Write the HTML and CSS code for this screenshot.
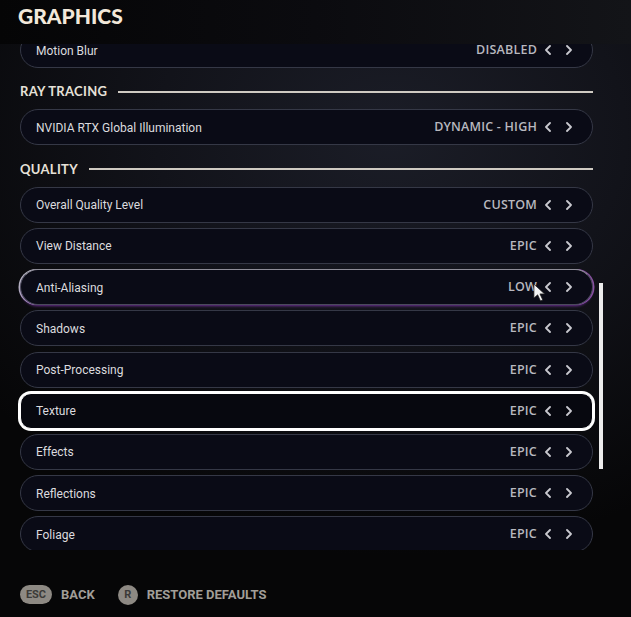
FILE: index.html
```html
<!DOCTYPE html>
<html>
<head>
<meta charset="utf-8">
<link rel="stylesheet" href="styles.css">
</head>
<body>
<div class="screen">
  <header class="top"><h1 class="title">GRAPHICS</h1></header>
  <div class="scroller">
    <div class="list">
      <div class="row first"><span class="label">Motion Blur</span><span class="val">DISABLED</span><span class="arrows"><svg class="chev" viewBox="0 0 6 10"><polyline points="5,1 1,5 5,9"/></svg><svg class="chev" viewBox="0 0 6 10"><polyline points="1,1 5,5 1,9"/></svg></span></div>
      <div class="section"><span class="sec-title">RAY TRACING</span><span class="sec-line"></span></div>
      <div class="row"><span class="label">NVIDIA RTX Global Illumination</span><span class="val">DYNAMIC - HIGH</span><span class="arrows"><svg class="chev" viewBox="0 0 6 10"><polyline points="5,1 1,5 5,9"/></svg><svg class="chev" viewBox="0 0 6 10"><polyline points="1,1 5,5 1,9"/></svg></span></div>
      <div class="section"><span class="sec-title">QUALITY</span><span class="sec-line"></span></div>
      <div class="row"><span class="label">Overall Quality Level</span><span class="val">CUSTOM</span><span class="arrows"><svg class="chev" viewBox="0 0 6 10"><polyline points="5,1 1,5 5,9"/></svg><svg class="chev" viewBox="0 0 6 10"><polyline points="1,1 5,5 1,9"/></svg></span></div>
      <div class="row"><span class="label">View Distance</span><span class="val">EPIC</span><span class="arrows"><svg class="chev" viewBox="0 0 6 10"><polyline points="5,1 1,5 5,9"/></svg><svg class="chev" viewBox="0 0 6 10"><polyline points="1,1 5,5 1,9"/></svg></span></div>
      <div class="row hover"><span class="label">Anti-Aliasing</span><span class="val">LOW</span><span class="arrows"><svg class="chev" viewBox="0 0 6 10"><polyline points="5,1 1,5 5,9"/></svg><svg class="chev" viewBox="0 0 6 10"><polyline points="1,1 5,5 1,9"/></svg></span>
        <svg class="cursor" viewBox="0 0 14 20"><path d="M1 1 L1 16 L5 12.5 L8 19 L10.5 18 L7.5 11.5 L12.5 11.5 Z"/></svg>
      </div>
      <div class="row"><span class="label">Shadows</span><span class="val">EPIC</span><span class="arrows"><svg class="chev" viewBox="0 0 6 10"><polyline points="5,1 1,5 5,9"/></svg><svg class="chev" viewBox="0 0 6 10"><polyline points="1,1 5,5 1,9"/></svg></span></div>
      <div class="row"><span class="label">Post-Processing</span><span class="val">EPIC</span><span class="arrows"><svg class="chev" viewBox="0 0 6 10"><polyline points="5,1 1,5 5,9"/></svg><svg class="chev" viewBox="0 0 6 10"><polyline points="1,1 5,5 1,9"/></svg></span></div>
      <div class="row selected"><span class="label">Texture</span><span class="val">EPIC</span><span class="arrows"><svg class="chev" viewBox="0 0 6 10"><polyline points="5,1 1,5 5,9"/></svg><svg class="chev" viewBox="0 0 6 10"><polyline points="1,1 5,5 1,9"/></svg></span></div>
      <div class="row"><span class="label">Effects</span><span class="val">EPIC</span><span class="arrows"><svg class="chev" viewBox="0 0 6 10"><polyline points="5,1 1,5 5,9"/></svg><svg class="chev" viewBox="0 0 6 10"><polyline points="1,1 5,5 1,9"/></svg></span></div>
      <div class="row"><span class="label">Reflections</span><span class="val">EPIC</span><span class="arrows"><svg class="chev" viewBox="0 0 6 10"><polyline points="5,1 1,5 5,9"/></svg><svg class="chev" viewBox="0 0 6 10"><polyline points="1,1 5,5 1,9"/></svg></span></div>
      <div class="row"><span class="label">Foliage</span><span class="val">EPIC</span><span class="arrows"><svg class="chev" viewBox="0 0 6 10"><polyline points="5,1 1,5 5,9"/></svg><svg class="chev" viewBox="0 0 6 10"><polyline points="1,1 5,5 1,9"/></svg></span></div>
    </div>
    <div class="track"><div class="thumb"></div></div>
  </div>
  <footer class="bottom">
    <span class="key esc">ESC</span><span class="action">BACK</span>
    <span class="key round">R</span><span class="action">RESTORE DEFAULTS</span>
  </footer>
</div>
</body>
</html>
```

FILE: styles.css
```css
* { box-sizing: border-box; }
html, body { margin: 0; padding: 0; }
body {
  width: 631px;
  height: 617px;
  overflow: hidden;
  background: #050506;
  font-family: Roboto, "Liberation Sans", sans-serif;
}
.screen {
  width: 631px;
  height: 617px;
  display: flex;
  flex-direction: column;
  background:
    radial-gradient(ellipse 520px 420px at 62% 22%, #1b1d27 0%, #12131a 45%, #060607 100%);
}
.top {
  height: 44px;
  flex: none;
  position: relative;
  z-index: 2;
  background: linear-gradient(90deg, #050506 0%, #0b0b0f 50%, #131418 100%);
  padding: 5px 0 0 18px;
}
.title {
  margin: 0;
  font-family: Lato, "Open Sans", sans-serif;
  font-weight: 900;
  font-size: 21px;
  line-height: 22px;
  color: #f2e8da;
  letter-spacing: 0;
}
.scroller {
  height: 506px;
  flex: none;
  overflow: hidden;
  display: flex;
}
.list {
  width: 573px;
  margin-left: 20px;
  margin-top: -12px;
  display: flex;
  flex-direction: column;
  gap: 5.2px;
}
.row {
  position: relative;
  flex: none;
  height: 36px;
  border: 1px solid #353846;
  border-radius: 18px;
  background: #0a0b16;
  display: flex;
  align-items: center;
  padding: 0 20px 0 15px;
}
.label {
  flex: 1;
  color: #dcdbdf;
  font-size: 12px;
  font-weight: 400;
  line-height: 14px;
  letter-spacing: 0;
  padding-top: 1px;
}
.val {
  color: #b8b8bf;
  font-family: "Open Sans", sans-serif;
  font-weight: 600;
  font-size: 12.5px;
  line-height: 14px;
  letter-spacing: 0.2px;
}
.arrows {
  display: flex;
  gap: 15px;
  margin-left: 8px;
  width: 27px;
}
.chev {
  width: 6px;
  height: 10px;
}
.chev polyline {
  fill: none;
  stroke: #c9c9cf;
  stroke-width: 1.8;
  stroke-linecap: round;
  stroke-linejoin: round;
}
.row.hover {
  border-color: #4b4a5c;
  border-top-color: #8e8d98;
  box-shadow:
    0 2px 3px -1px rgba(140, 60, 190, 0.75),
    -1.5px 0 0 0 rgba(225, 225, 240, 0.8),
    1.5px 0 0 0 rgba(190, 110, 220, 0.7);
}
.row.selected {
  border: 1px solid #fff;
  border-radius: 11px;
  box-shadow: 0 0 0 2px #ffffff;
  background: #07080f;
}
.cursor {
  position: absolute;
  left: 512px;
  top: 13px;
  width: 13px;
  height: 19px;
}
.cursor path {
  fill: #f4f4f4;
  stroke: #222;
  stroke-width: 0.8;
}
.section {
  flex: none;
  height: 31px;
  padding-top: 6px;
  display: flex;
  align-items: center;
}
.sec-title {
  font-family: Lato, sans-serif;
  font-weight: 700;
  font-size: 13px;
  color: #e6e1d8;
  letter-spacing: 0.3px;
  line-height: 25px;
}
.sec-line {
  flex: 1;
  height: 2px;
  background: #cfcac2;
  margin-left: 11px;
}
.track {
  margin-left: 6px;
  width: 4px;
}
.thumb {
  margin-top: 239px;
  width: 3.5px;
  height: 186px;
  background: #ececec;
}
.bottom {
  flex: 1;
  display: flex;
  align-items: center;
  padding: 22px 0 0 20px;
}
.key {
  background: #8d8983;
  color: #3b3a38;
  font-weight: 700;
  font-size: 11px;
  display: flex;
  align-items: center;
  justify-content: center;
  height: 19px;
}
.key.esc {
  width: 32px;
  border-radius: 10px;
}
.key.round {
  width: 20px;
  height: 20px;
  border-radius: 50%;
  margin-left: 23px;
}
.action {
  color: #a19e98;
  font-weight: 700;
  font-size: 13px;
  margin-left: 9px;
}
```
